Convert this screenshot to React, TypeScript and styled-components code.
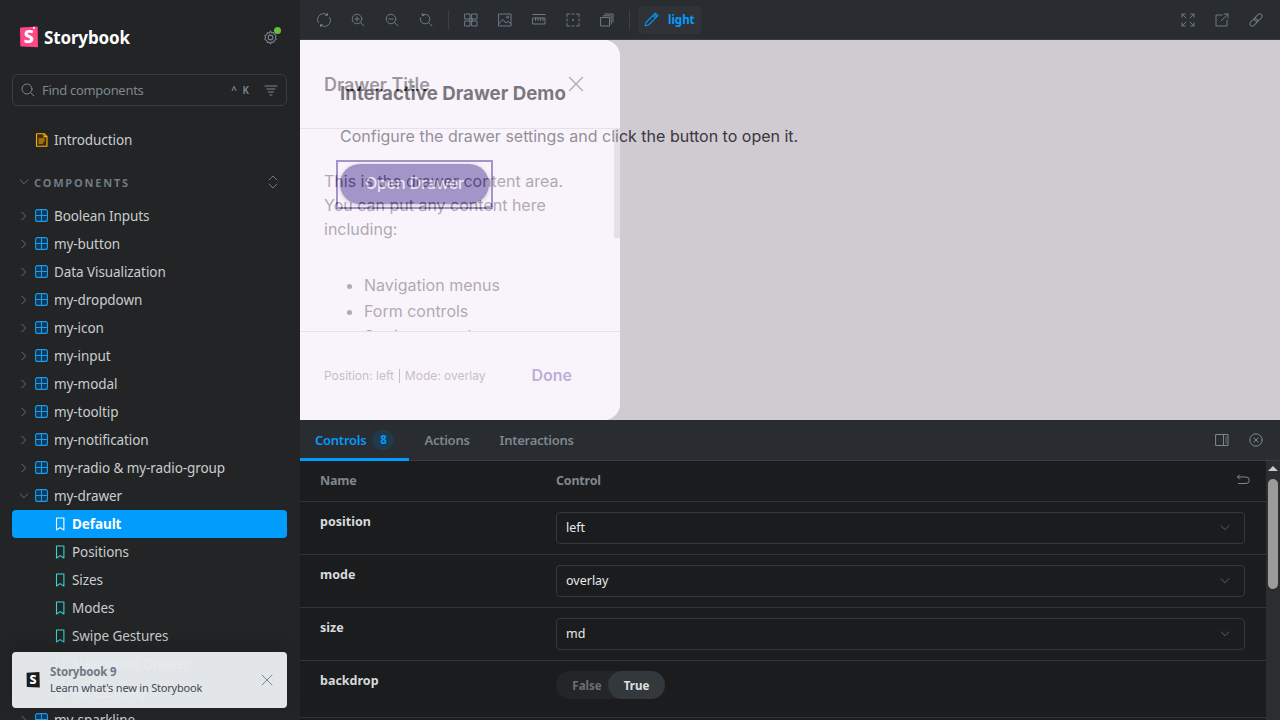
import styled, { createGlobalStyle } from "styled-components";
import { Fragment, ReactNode } from "react";

const SB_FONT = `"Noto Sans", "Open Sans", sans-serif`;
const STORY_FONT = `Inter, "Liberation Sans", sans-serif`;

const GlobalStyle = createGlobalStyle`
    html, body {
        margin: 0;
        width: 1280px;
        height: 720px;
        overflow: hidden;
        background: #222425;
        font-family: ${SB_FONT};
    }
    * { box-sizing: border-box; }
`;

const Page = styled.div`
    display: grid;
    grid-template-columns: 300px 980px;
    width: 1280px;
    height: 720px;
    overflow: hidden;
`;

/* sidebar */
const Sidebar = styled.aside`
    position: relative;
    height: 720px;
    overflow: hidden;
    padding: 20px 13px 0 12px;
    background: #222425;
`;

const Brand = styled.div`
    display: flex;
    align-items: center;
    height: 34px;
    padding-left: 8px;
`;

const BrandName = styled.span`
    margin-left: 6px;
    color: #fff;
    font-size: 17px;
    font-weight: 700;
    letter-spacing: -0.15px;
`;

const Gear = styled.div`
    position: relative;
    display: flex;
    margin-left: auto;
    margin-right: 9px;
    color: #7b858f;
    i {
        position: absolute;
        top: -3px;
        right: -3px;
        width: 7px;
        height: 7px;
        border-radius: 50%;
        background: #66bf3c;
    }
`;

const Search = styled.div`
    display: flex;
    align-items: center;
    height: 32px;
    margin-top: 20px;
    padding: 0 8px;
    border: 1px solid #3b3e41;
    border-radius: 6px;
    color: #7d8790;
    font-size: 13px;
    span { margin-left: 7px; letter-spacing: -0.3px; }
`;

const Shortcut = styled.b`
    margin-left: auto;
    margin-right: 15px;
    font-size: 10px;
    font-weight: 600;
    word-spacing: 3px;
`;

const Row = styled.div<{ $level: number; $active?: boolean }>`
    display: flex;
    align-items: center;
    height: 28px;
    padding-left: ${p => (p.$level === 2 ? 41 : 23)}px;
    border-radius: 4px;
    color: ${p => (p.$active ? "#fff" : "#c9cdcf")};
    background: ${p => (p.$active ? "#029cfd" : "transparent")};
    font-size: 13.5px;
    font-weight: ${p => (p.$active ? 700 : 400)};
    letter-spacing: -0.08px;
    white-space: nowrap;
    span { margin-left: 5px; }
`;

const Chevron = styled.span`
    display: flex;
    width: 12px;
    margin: 0 5px 0 -17px !important;
    color: #6f7a84;
`;

const Intro = styled.div`
    margin-top: 20px;
`;

const SectionHead = styled.div`
    display: flex;
    align-items: center;
    height: 28px;
    margin: 15px 0 5px;
    padding: 0 7px 2px 6px;
    color: #6f7a84;
    font-size: 11px;
    font-weight: 700;
    letter-spacing: 1.8px;
    span { margin-left: 4px; }
    svg:last-child { margin-left: auto; }
`;

const Toast = styled.div`
    position: absolute;
    left: 12px;
    bottom: 12px;
    display: flex;
    align-items: center;
    width: 275px;
    height: 56px;
    padding: 0 14px;
    border-radius: 4px;
    background: rgba(232, 236, 239, 0.97);
    box-shadow: 0 -6px 14px rgba(27, 28, 29, 0.45);
`;

const ToastText = styled.div`
    display: flex;
    flex-direction: column;
    margin-left: 10px;
    line-height: 16px;
    letter-spacing: -0.2px;
    b {
        color: #6f7a84;
        font-size: 11.5px;
        font-weight: 700;
    }
    span {
        color: #414a52;
        font-size: 11px;
    }
`;

const ToastClose = styled.div`
    display: flex;
    margin-left: auto;
    margin-right: -1px;
    color: #7d8790;
`;

/* main column */
const Main = styled.main`
    display: grid;
    grid-template-rows: 40px 380px 300px;
    min-width: 0;
`;

const Toolbar = styled.div`
    display: flex;
    align-items: center;
    padding: 0 17px;
    background: #292d31;
    border-bottom: 1px solid #3a3d40;
    color: #6f7a84;
`;

const ToolIcon = styled.div`
    display: flex;
    justify-content: center;
    width: 14px;
    margin-right: 20px;
`;

const ToolSep = styled.div`
    width: 1px;
    height: 20px;
    margin: 0 15px 0 -5px;
    background: #3b3f43;
`;

const ThemeButton = styled.div`
    display: flex;
    align-items: center;
    width: 63px;
    height: 28px;
    margin-left: -7px;
    padding-left: 6px;
    border-radius: 4px;
    background: #2f3337;
    color: #029cfd;
    font-size: 11.5px;
    font-weight: 700;
    span { margin-left: 9px; }
`;

const ToolRight = styled.div`
    display: flex;
    margin-left: auto;
    gap: 20px;
`;

/* story canvas */
const Canvas = styled.div`
    position: relative;
    overflow: hidden;
    background: #fef7ff;
    font-family: ${STORY_FONT};
`;

const Story = styled.div`
    padding: 43px 40px 0;
`;

const StoryTitle = styled.h3`
    margin: 0;
    color: #1d1b20;
    font-size: 18.7px;
    font-weight: 700;
    line-height: 22px;
`;

const StoryText = styled.p`
    margin: 19px 0 12px;
    color: #49454f;
    font-size: 16px;
    line-height: 24px;
`;

const FocusRing = styled.div`
    display: inline-flex;
    margin-left: -4px;
    padding: 2px 2px 3px;
    border: 2px solid #6750a4;
`;

const OpenButton = styled.button`
    display: block;
    width: 149px;
    height: 40px;
    padding: 0 0 2px;
    border: 0;
    border-radius: 20px;
    background: #6750a4;
    box-shadow: 0 1px 4px rgba(0, 0, 0, 0.35);
    color: rgba(255, 255, 255, 0.85);
    font-family: ${STORY_FONT};
    font-size: 16px;
    font-weight: 500;
    letter-spacing: -0.15px;
`;

const Scrim = styled.div`
    position: absolute;
    top: 0;
    left: 0;
    width: 320px;
    height: 380px;
    border-radius: 0 16px 16px 0;
    box-shadow: 0 0 0 1000px rgba(0, 0, 0, 0.18);
`;

const Drawer = styled.section`
    position: absolute;
    top: 0;
    left: 0;
    display: grid;
    grid-template-rows: 89px 202px 89px;
    width: 320px;
    height: 380px;
    overflow: hidden;
    border-radius: 0 16px 16px 0;
    background: #f3f0f8;
    opacity: 0.43;
`;

const DrawerHead = styled.header`
    display: flex;
    align-items: center;
    justify-content: space-between;
    height: 89px;
    padding: 0 35px 0 24px;
    border-bottom: 1px solid #c9c5cb;
    color: #1d1b20;
    font-size: 18px;
    font-weight: 600;
    svg { color: #49454f; margin-top: -1px; }
`;

const DrawerBody = styled.div`
    position: relative;
    overflow: hidden;
    padding: 40px 16px 0 24px;
    color: #49454f;
    font-size: 16px;
    line-height: 24px;
    p { margin: 0; }
    ul {
        margin: 32px 0 0;
        padding-left: 40px;
    }
    li { margin-bottom: 2px; }
    li:last-child { margin-top: -1px; }
`;

const DrawerThumb = styled.div`
    position: absolute;
    top: 0;
    right: 0;
    width: 6px;
    height: 109px;
    background: #c6c0cb;
`;

const DrawerFoot = styled.footer`
    display: flex;
    align-items: center;
    padding: 0 48px 2px 24px;
    border-top: 1px solid #c9c5cb;
    color: #79747e;
    font-size: 12px;
    i {
        display: inline-block;
        width: 1px;
        height: 14px;
        margin: 0 5px;
        vertical-align: -3px;
        background: #79747e;
    }
    b {
        margin-left: auto;
        color: #6750a4;
        font-size: 16px;
        font-weight: 600;
    }
`;

/* addons panel */
const Panel = styled.div`
    display: grid;
    grid-template-rows: 41px 1fr;
    overflow: hidden;
    background: #1b1c1d;
`;

const Tabs = styled.div`
    display: flex;
    align-items: stretch;
    background: #292d31;
    border-bottom: 1px solid #3a3d40;
    font-size: 13px;
    font-weight: 600;
`;

const Tab = styled.div<{ $active?: boolean }>`
    display: flex;
    align-items: center;
    padding: 1px 15px 0;
    margin-bottom: -1px;
    border-bottom: 3px solid ${p => (p.$active ? "#029cfd" : "transparent")};
    color: ${p => (p.$active ? "#029cfd" : "#7d8790")};
    letter-spacing: -0.25px;
`;

const Badge = styled.span`
    display: flex;
    align-items: center;
    justify-content: center;
    width: 22px;
    height: 20px;
    margin-left: 6px;
    border-radius: 10px;
    background: #1e3a4f;
    font-size: 11.5px;
    font-weight: 700;
`;

const TabTools = styled.div`
    display: flex;
    align-items: center;
    gap: 20px;
    margin-left: auto;
    padding-right: 17px;
    color: #7d8790;
`;

const TableArea = styled.div`
    display: grid;
    grid-template-columns: 966px 14px;
    overflow: hidden;
`;

const Table = styled.div`
    display: flex;
    flex-direction: column;
`;

const ArgRow = styled.div<{ $height: number }>`
    display: grid;
    grid-template-columns: 236px 1fr;
    flex: none;
    height: ${p => p.$height}px;
    padding: 10px 21px 0 20px;
    border-bottom: 1px solid #333536;
`;

const ArgName = styled.div`
    color: #d7dadc;
    font-size: 12.5px;
    font-weight: 700;
    line-height: 20px;
`;

const HeadRow = styled.div`
    display: grid;
    grid-template-columns: 236px 1fr 14px;
    flex: none;
    align-items: center;
    height: 41px;
    padding: 0 16px 2px 20px;
    border-bottom: 1px solid #333536;
    color: #80878d;
    font-size: 12.5px;
    font-weight: 700;
    letter-spacing: -0.2px;
    svg { color: #7d8790; }
`;

const Select = styled.div`
    display: flex;
    align-items: center;
    justify-content: space-between;
    height: 32px;
    padding: 0 13px 2px 9px;
    border: 1px solid #35383a;
    border-radius: 4px;
    color: #e8e9ea;
    font-size: 12.5px;
    svg { color: #666d73; margin-top: 2px; }
`;

const Toggle = styled.div`
    display: flex;
    align-items: center;
    width: 109px;
    height: 28px;
    border-radius: 14px;
    background: #232527;
    font-size: 11.5px;
    font-weight: 700;
`;

const ToggleOption = styled.span<{ $on?: boolean }>`
    display: flex;
    align-items: center;
    justify-content: center;
    width: ${p => (p.$on ? 57 : 52)}px;
    height: 28px;
    padding-left: ${p => (p.$on ? 0 : 10)}px;
    border-radius: 14px;
    background: ${p => (p.$on ? "#33383c" : "transparent")};
    color: ${p => (p.$on ? "#dfe2e4" : "#6b7076")};
`;

const ScrollTrack = styled.div`
    display: flex;
    flex-direction: column;
    align-items: center;
    background: #2c2d2e;
    padding-top: 5px;
`;

const ScrollArrow = styled.div`
    width: 0;
    height: 0;
    border-left: 5px solid transparent;
    border-right: 5px solid transparent;
    border-bottom: 5px solid #c9c9c9;
`;

const ScrollThumb = styled.div`
    width: 10px;
    height: 110px;
    margin-top: 8px;
    border-radius: 5px;
    background: #9b9b9b;
`;

/* drawings */
type IconProps = { size?: number; color?: string; children: ReactNode };

function Icon({ size = 14, color = "currentColor", children }: IconProps) {
    return (
        <svg width={size} height={size} viewBox="0 0 14 14" fill="none" stroke={color} strokeWidth="1" strokeLinecap="round" strokeLinejoin="round" style={{ flex: "none" }}>
            {children}
        </svg>
    );
}

const Logo = () => (
    <svg width="18" height="22" viewBox="0 0 18 22" style={{ flex: "none" }}>
        <path d="M1 1.6 17.6 .6 18 21.2 1.4 20.6a1.2 1.2 0 0 1-1.1-1.2L0 2.8a1.2 1.2 0 0 1 1-1.2Z" fill="#ff4785" />
        <path d="M13 1l1.6-.2.2 2.2-.9-.6-.9.7Z" fill="#fff" />
        <text x="8.8" y="16.8" textAnchor="middle" fill="#fff" fontSize="18" fontWeight="800" fontFamily={SB_FONT}>S</text>
    </svg>
);

const ToastLogo = () => (
    <svg width="14" height="16" viewBox="0 0 14 16" style={{ flex: "none" }}>
        <path d="M.6 .7 13.4 0l.4 15.6L.8 15.1.6 .7Z" fill="#1b1c1d" />
        <text x="7" y="12.4" textAnchor="middle" fill="#fff" fontSize="12.5" fontWeight="800" fontFamily={SB_FONT}>S</text>
    </svg>
);

const ComponentIcon = () => (
    <svg width="14" height="14" viewBox="0 0 14 14" fill="none" style={{ flex: "none" }}>
        <rect x=".6" y=".6" width="11.8" height="11.8" rx="2" fill="#0d3a5a" stroke="#1e9be8" strokeWidth="1.1" />
        <path d="M6.5 .6v11.8M.6 6.5h11.8" stroke="#1e9be8" strokeWidth="1.1" />
    </svg>
);

const StoryIcon = ({ color }: { color: string }) => (
    <svg width="14" height="14" viewBox="0 0 14 14" fill="none" style={{ flex: "none" }}>
        <path d="M3.5 13V1h7.4v12L7.2 10.6 3.5 13Z" stroke={color} strokeWidth="1.1" strokeLinejoin="round" />
    </svg>
);

const DocIcon = () => (
    <svg width="14" height="14" viewBox="0 0 14 14" fill="none" style={{ flex: "none" }}>
        <path d="M1.5 .8h8l2.5 2.5v9.9H1.5V.8Z" fill="#3b3011" stroke="#ffae00" strokeWidth="1.1" strokeLinejoin="round" />
        <path d="M3.6 6h6M3.6 8h6M3.6 10h4.4M9 1v2.6h3" stroke="#ffae00" strokeWidth="1.1" />
    </svg>
);

const ChevronRight = () => <Icon size={12}><path d="M4.5 2.5 9 7l-4.5 4.5" /></Icon>;
const ChevronDown = () => <Icon size={12}><path d="M2.5 4.5 7 9l4.5-4.5" /></Icon>;
const CloseX = ({ size = 14 }: { size?: number }) => <Icon size={size}><path d="M2 2l10 10M12 2 2 12" /></Icon>;

const treeItems = ["Boolean Inputs", "my-button", "Data Visualization", "my-dropdown", "my-icon", "my-input", "my-modal", "my-tooltip", "my-notification", "my-radio & my-radio-group"];
const drawerStories = ["Default", "Positions", "Sizes", "Modes", "Swipe Gestures", "Navigation Drawer", "Accessibility"];

const leftTools: ReactNode[][] = [
    [
        <><path d="M1.4 9.6A6 6 0 0 1 10.4 2" /><path d="M10.4 .2l.2 2-2 .3" /><path d="M12.6 4.4A6 6 0 0 1 3.6 12" /><path d="M3.6 13.8l-.2-2 2-.3" /></>,
        <><circle cx="6" cy="6" r="4.8" /><path d="M9.6 9.6 13 13M6 3.8v4.4M3.8 6h4.4" /></>,
        <><circle cx="6" cy="6" r="4.8" /><path d="M9.6 9.6 13 13M3.8 6h4.4" /></>,
        <><path d="M3.2 2.1A4.8 4.8 0 1 1 1.3 5" /><path d="M3.4.4l-.3 1.9 1.9.3M9.6 9.6 13 13" /></>,
    ],
    [
        <><rect x="1" y="1" width="5" height="5" /><rect x="8" y="1" width="5" height="5" /><rect x="1" y="8" width="5" height="5" /><rect x="8" y="8" width="5" height="5" /><rect x="5" y="5" width="4" height="4" fill="#6f7a84" stroke="none" opacity=".55" /></>,
        <><rect x="1" y="1" width="12" height="12" /><circle cx="9.6" cy="4.2" r="1" /><path d="M1 10.5 5 6.5l3 3.5 2-1.6 3 2.4" /></>,
        <><path d="M1 1.5h12" /><rect x="1" y="5" width="12" height="6" /><path d="M3.5 5v2.5M6 5v2.5M8.5 5v2.5M11 5v2.5" /></>,
        <><path d="M1 3.5V1h2.5M10.5 1H13v2.5M13 10.5V13h-2.5M3.5 13H1v-2.5M1 6v2M13 6v2M6 1h2M6 13h2" /><circle cx="7" cy="7" r=".5" fill="currentColor" /></>,
        <><rect x="1" y="4.5" width="8.5" height="8.5" /><path d="M3.2 2.8H11.2V11M5 1h8v8" /></>,
    ],
];

const rightTools: ReactNode[] = [
    <><path d="M1 1l4 4M1 4.2V1h3.2M13 1 9 5M9.8 1H13v3.2M1 13l4-4M1 9.8V13h3.2M13 13 9 9M9.8 13H13V9.8" /></>,
    <><path d="M7 2H1v11h11V7" /><path d="M6.5 7.5 13 1M9 1h4v4" /></>,
    <g transform="rotate(-45 7 7)"><rect x="-.6" y="4.6" width="8.6" height="4.8" rx="2.4" /><rect x="6" y="4.6" width="8.6" height="4.8" rx="2.4" /></g>,
];

const args = [
    { name: "position", value: "left" },
    { name: "mode", value: "overlay" },
    { name: "size", value: "md" },
];

export default function App() {
    return (
        <Page>
            <GlobalStyle />
            <Sidebar>
                <Brand>
                    <Logo />
                    <BrandName>Storybook</BrandName>
                    <Gear>
                        <Icon size={15}><path d="M7 1l1 1.6 1.9-.3.6 1.8 1.7.9-.6 1.9.6 1.9-1.7.9-.6 1.8-1.9-.3L7 13l-1-1.6-1.9.3-.6-1.8-1.7-.9.6-1.9-.6-1.9 1.7-.9.6-1.8 1.9.3L7 1Z" /><circle cx="7" cy="7" r="2.2" /></Icon>
                        <i />
                    </Gear>
                </Brand>
                <Search>
                    <Icon><circle cx="6" cy="6" r="5" /><path d="M9.8 9.8 13 13" /></Icon>
                    <span>Find components</span>
                    <Shortcut>^ K</Shortcut>
                    <Icon><path d="M1 3h12M3 6h8M4.5 9h5M6 12h2" /></Icon>
                </Search>
                <Intro>
                    <Row $level={1}>
                        <DocIcon />
                        <span>Introduction</span>
                    </Row>
                </Intro>
                <SectionHead>
                    <ChevronDown />
                    <span>COMPONENTS</span>
                    <Icon><path d="M3 5l4-4 4 4M3 9l4 4 4-4" /></Icon>
                </SectionHead>
                {treeItems.map(item => (
                    <Row $level={1} key={item}>
                        <Chevron><ChevronRight /></Chevron>
                        <ComponentIcon />
                        <span>{item}</span>
                    </Row>
                ))}
                <Row $level={1}>
                    <Chevron><ChevronDown /></Chevron>
                    <ComponentIcon />
                    <span>my-drawer</span>
                </Row>
                {drawerStories.map((story, i) => (
                    <Row $level={2} $active={i === 0} key={story}>
                        <StoryIcon color={i === 0 ? "#fff" : "#37d5d3"} />
                        <span>{story}</span>
                    </Row>
                ))}
                <Row $level={1}>
                    <Chevron><ChevronRight /></Chevron>
                    <ComponentIcon />
                    <span>my-sparkline</span>
                </Row>
                <Toast>
                    <ToastLogo />
                    <ToastText>
                        <b>Storybook 9</b>
                        <span>Learn what's new in Storybook</span>
                    </ToastText>
                    <ToastClose><CloseX /></ToastClose>
                </Toast>
            </Sidebar>
            <Main>
                <Toolbar>
                    {leftTools.map((group, g) => (
                        <Fragment key={g}>
                            {group.map((tool, i) => <ToolIcon key={i}><Icon>{tool}</Icon></ToolIcon>)}
                            <ToolSep />
                        </Fragment>
                    ))}
                    <ThemeButton>
                        <Icon size={15} color="#029cfd"><path d="M1.2 12.8l.6-3L9.6 2 12 4.4l-7.8 7.8-3 .6ZM8.4 3.2l2.4 2.4M10.6 1l2.4 2.4-1 1L9.6 2l1-1Z" /></Icon>
                        <span>light</span>
                    </ThemeButton>
                    <ToolRight>
                        {rightTools.map((tool, i) => <Icon key={i}>{tool}</Icon>)}
                    </ToolRight>
                </Toolbar>
                <Canvas>
                    <Story>
                        <StoryTitle>Interactive Drawer Demo</StoryTitle>
                        <StoryText>Configure the drawer settings and click the button to open it.</StoryText>
                        <FocusRing>
                            <OpenButton>Open Drawer</OpenButton>
                        </FocusRing>
                    </Story>
                    <Scrim />
                    <Drawer>
                        <DrawerHead>
                            <span>Drawer Title</span>
                            <CloseX size={18} />
                        </DrawerHead>
                        <DrawerBody>
                            <p>This is the drawer content area.</p>
                            <p>You can put any content here</p>
                            <p>including:</p>
                            <ul>
                                <li>Navigation menus</li>
                                <li>Form controls</li>
                                <li>Settings panels</li>
                            </ul>
                            <DrawerThumb />
                        </DrawerBody>
                        <DrawerFoot>
                            <span>Position: left<i />Mode: overlay</span>
                            <b>Done</b>
                        </DrawerFoot>
                    </Drawer>
                </Canvas>
                <Panel>
                    <Tabs>
                        <Tab $active>Controls<Badge>8</Badge></Tab>
                        <Tab>Actions</Tab>
                        <Tab>Interactions</Tab>
                        <TabTools>
                            <Icon><rect x="1" y="1.5" width="12" height="11" /><path d="M8.5 1.5v11M10.7 4h.6M10.7 6h.6M10.7 8h.6M10.7 10h.6" /></Icon>
                            <Icon><circle cx="7" cy="7" r="6.2" /><path d="M4.8 4.8l4.4 4.4M9.2 4.8 4.8 9.2" /></Icon>
                        </TabTools>
                    </Tabs>
                    <TableArea>
                        <Table>
                            <HeadRow>
                                <span>Name</span>
                                <span>Control</span>
                                <Icon><path d="M3.5 2 1.5 4l2 2M1.5 4H10a2.8 2.8 0 0 1 0 6.5H2.5" /></Icon>
                            </HeadRow>
                            {args.map(arg => (
                                <ArgRow $height={53} key={arg.name}>
                                    <ArgName>{arg.name}</ArgName>
                                    <Select>
                                        {arg.value}
                                        <ChevronDown />
                                    </Select>
                                </ArgRow>
                            ))}
                            <ArgRow $height={57}>
                                <ArgName>backdrop</ArgName>
                                <Toggle>
                                    <ToggleOption>False</ToggleOption>
                                    <ToggleOption $on>True</ToggleOption>
                                </Toggle>
                            </ArgRow>
                        </Table>
                        <ScrollTrack>
                            <ScrollArrow />
                            <ScrollThumb />
                        </ScrollTrack>
                    </TableArea>
                </Panel>
            </Main>
        </Page>
    );
}
